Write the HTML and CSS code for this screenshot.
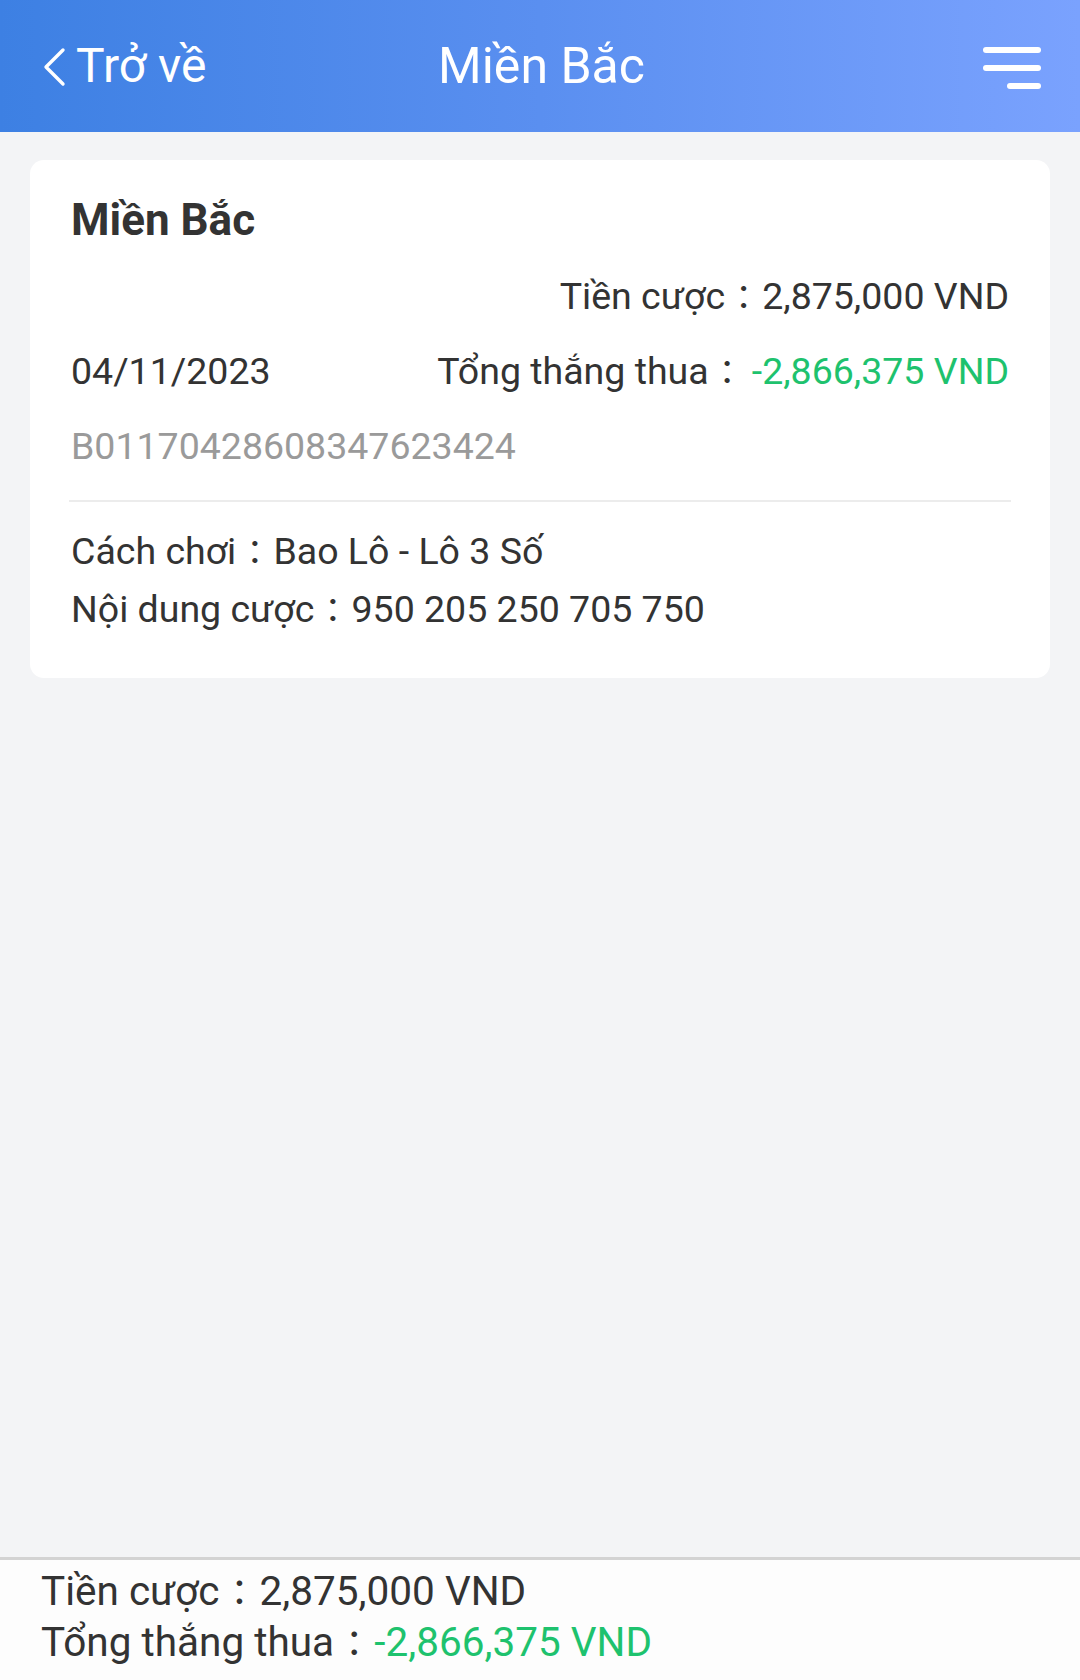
FILE: index.html
```html
<!DOCTYPE html>
<html lang="vi">
<head>
<meta charset="utf-8">
<title>Miền Bắc</title>
<link rel="stylesheet" href="styles.css">
</head>
<body>
<div class="page">
  <header class="topbar">
    <div class="back">
      <svg class="chev" width="24" height="40" viewBox="0 0 24 40"><path d="M21 3 L4 20 L21 37" fill="none" stroke="#fff" stroke-width="3.4" stroke-linecap="round" stroke-linejoin="round"/></svg>
      <span class="back-text">Trở về</span>
    </div>
    <div class="title">Miền Bắc</div>
    <div class="menu">
      <svg width="58" height="44" viewBox="0 0 58 44"><g stroke="#fff" stroke-width="6" stroke-linecap="round"><line x1="3" y1="3" x2="55" y2="3"/><line x1="3" y1="21" x2="55" y2="21"/><line x1="27" y1="39" x2="55" y2="39"/></g></svg>
    </div>
  </header>
  <main class="content">
    <section class="card">
      <h2 class="card-title">Miền Bắc</h2>
      <div class="row row-right"><span>Tiền cược<span class="colon">：</span>2,875,000 VND</span></div>
      <div class="row row-split"><span>04/11/2023</span><span>Tổng thắng thua<span class="colon">：</span><span class="green pad">-2,866,375 VND</span></span></div>
      <div class="row muted">B01170428608347623424</div>
      <div class="divider"></div>
      <div class="detail">Cách chơi<span class="colon">：</span>Bao Lô - Lô 3 Số</div>
      <div class="detail">Nội dung cược<span class="colon">：</span>950 205 250 705 750</div>
    </section>
  </main>
  <footer class="summary">
    <div class="sum-line">Tiền cược<span class="colon">：</span>2,875,000 VND</div>
    <div class="sum-line">Tổng thắng thua<span class="colon">：</span><span class="green">-2,866,375 VND</span></div>
  </footer>
</div>
</body>
</html>
```

FILE: styles.css
```css
* { box-sizing: border-box; }
html, body { margin: 0; padding: 0; }
body {
  width: 1080px;
  height: 1680px;
  background: #f3f4f6;
  font-family: Roboto, "Noto Sans", "Noto Sans CJK JP", sans-serif;
  color: #333;
}
.page {
  height: 1680px;
  display: flex;
  flex-direction: column;
}
.topbar {
  height: 132px;
  flex: none;
  display: grid;
  grid-template-columns: 1fr auto 1fr;
  align-items: center;
  padding: 0 39px 0 42px;
  background: linear-gradient(90deg, #3d80e3 0%, #5a8ff0 50%, #7aa2fe 100%);
  color: #fff;
}
.back {
  display: flex;
  align-items: center;
  gap: 10px;
}
.chev { display: block; margin-top: 2px; }
.back-text {
  font-size: 48px;
  line-height: 1;
  padding-bottom: 0;
}
.title {
  font-size: 50px;
  line-height: 1;
  padding-bottom: 1px;
}
.menu {
  justify-self: end;
  display: flex;
  align-items: center;
  padding-top: 6px;
}
.menu svg { display: block; }
.content {
  flex: 1;
  padding: 28px 30px 0;
}
.card {
  background: #fff;
  border-radius: 14px;
  padding: 30px 41px 40px;
}
.card-title {
  margin: 0;
  font-size: 44px;
  font-weight: 700;
  line-height: 60px;
  color: #333;
}
.row {
  font-size: 37.5px;
  line-height: 52px;
  margin-top: 23px;
}
.card-title + .row { margin-top: 20px; }
.row-right { text-align: right; }
.row-split {
  display: flex;
  justify-content: space-between;
}
.muted { color: #9a9a9a; }
.green { color: #1ec26e; }
.pad { margin-left: 6px; }
.colon {
  font-family: "Noto Sans CJK JP", "Noto Sans CJK TC", sans-serif;
  font-size: 0.9em;
  margin: 0 0.05em;
  line-height: 1;
  vertical-align: -0.04em;
}
.divider {
  height: 2px;
  background: #ececec;
  margin: 28px -2px 20px;
}
.detail {
  font-size: 37.5px;
  line-height: 58px;
}
.summary {
  flex: none;
  height: 123px;
  background: #fdfdfd;
  border-top: 3px solid #d3d3d3;
  padding: 6px 41px 0;
}
.sum-line {
  font-size: 40.5px;
  line-height: 51px;
}
```
